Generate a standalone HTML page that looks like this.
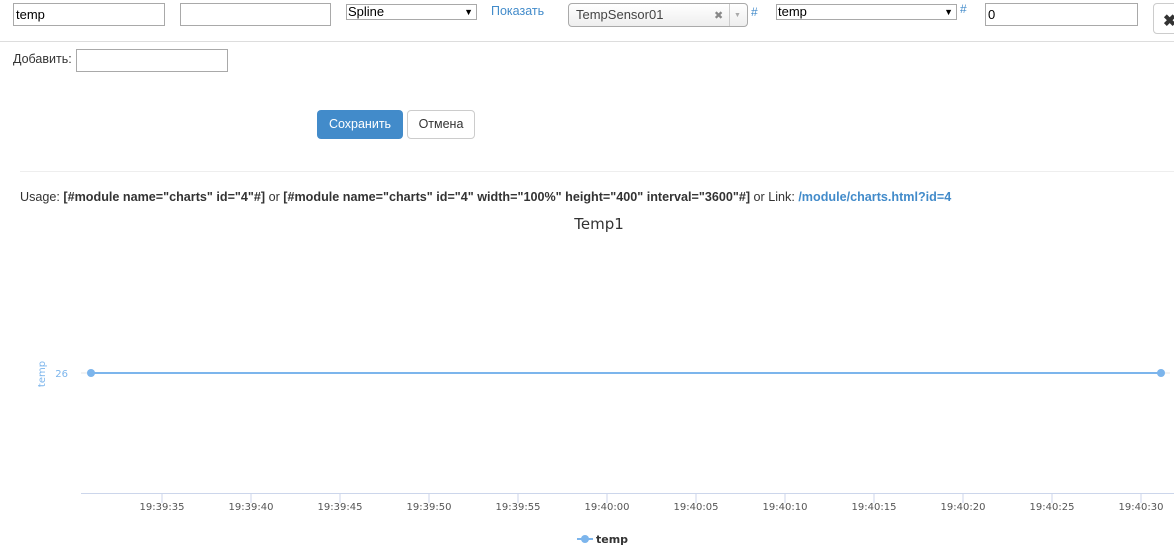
<!DOCTYPE html>
<html><head><meta charset="utf-8"><style>
body{margin:0;width:1174px;height:550px;overflow:hidden;background:#fff;font-family:"Liberation Sans",Arial,sans-serif;font-size:12px;color:#333;position:relative}
.a{position:absolute}
.inp{border:1px solid #a9a9a9;height:23px;box-sizing:border-box;font-size:13px;padding:2px 2px;line-height:17px;color:#000}
.sel{border:1px solid #a9a9a9;height:16px;box-sizing:border-box;font-size:13px;line-height:13px;padding-left:1px;color:#000}
.sel:after{content:"▼";position:absolute;right:3px;top:1px;font-size:9px}
</style></head><body>
<div class="a inp" style="left:13px;top:3px;width:152px">temp</div>
<div class="a inp" style="left:180px;top:3px;width:151px"></div>
<div class="a sel" style="left:346px;top:4px;width:131px">Spline</div>
<div class="a" style="left:491px;top:4px;font-size:12.5px;color:#428bca">Показать</div>
<div class="a" style="left:568px;top:3px;width:180px;height:24px;border:1px solid #aaa;border-radius:4px;box-sizing:border-box;background:linear-gradient(#fff,#eee);font-size:13px;color:#444;padding:4px 7px;line-height:14px">TempSensor01<span class="a" style="left:145px;top:5px;font-size:11px;color:#888">✖</span><span class="a" style="left:160px;top:0;width:1px;height:22px;background:#ccc"></span><span class="a" style="left:165px;top:5px;font-size:7px;color:#aaa">▼</span></div>
<div class="a" style="left:751px;top:5px;color:#428bca;font-size:12px">#</div>
<div class="a sel" style="left:776px;top:4px;width:181px">temp</div>
<div class="a" style="left:960px;top:2px;color:#428bca;font-size:12px">#</div>
<div class="a inp" style="left:985px;top:3px;width:153px">0</div>
<div class="a" style="left:1153px;top:3px;width:40px;height:31px;border:1px solid #ccc;border-radius:4px;box-sizing:border-box;font-size:16px;font-weight:bold;padding:7px 0 0 9px;color:#333">✖</div>
<div class="a" style="left:0;top:41px;width:1174px;height:1px;background:#ddd"></div>
<div class="a" style="left:13px;top:52px;font-size:12.5px">Добавить:</div>
<div class="a inp" style="left:76px;top:49px;width:152px"></div>
<div class="a" style="left:317px;top:110px;width:86px;height:29px;background:#428bca;border-radius:4px;color:#fff;font-size:12.5px;text-align:center;line-height:28px">Сохранить</div>
<div class="a" style="left:407px;top:110px;width:68px;height:29px;border:1px solid #ccc;box-sizing:border-box;border-radius:4px;font-size:12.5px;text-align:center;line-height:27px">Отмена</div>
<div class="a" style="left:20px;top:171px;width:1154px;height:1px;background:#eee"></div>
<div class="a" style="left:20px;top:190px;font-size:12.6px;white-space:nowrap">Usage: <b>[#module name="charts" id="4"#]</b> or <b>[#module name="charts" id="4" width="100%" height="400" interval="3600"#]</b> or Link: <b style="color:#428bca">/module/charts.html?id=4</b></div>
<svg class="a" style="left:0;top:0" width="1174" height="550" font-family="DejaVu Sans,sans-serif">
<text x="599" y="229" text-anchor="middle" font-size="15" fill="#333">Temp1</text>
<text x="45" y="374" font-size="10" fill="#7cb5ec" text-anchor="middle" transform="rotate(-90 45 374)">temp</text>
<text x="68" y="377" font-size="10" fill="#7cb5ec" text-anchor="end">26</text>
<line x1="81" y1="373" x2="1170" y2="373" stroke="#e6e6e6"/>
<line x1="91" y1="373" x2="1161" y2="373" stroke="#7cb5ec" stroke-width="2"/>
<circle cx="91" cy="373" r="4" fill="#7cb5ec"/><circle cx="1161" cy="373" r="4" fill="#7cb5ec"/>
<line x1="81" y1="493.5" x2="1174" y2="493.5" stroke="#ccd6eb"/>
<g stroke="#ccd6eb">
<line x1="162" y1="493" x2="162" y2="503"/><line x1="251" y1="493" x2="251" y2="503"/><line x1="340" y1="493" x2="340" y2="503"/><line x1="429" y1="493" x2="429" y2="503"/><line x1="518" y1="493" x2="518" y2="503"/><line x1="607" y1="493" x2="607" y2="503"/><line x1="696" y1="493" x2="696" y2="503"/><line x1="785" y1="493" x2="785" y2="503"/><line x1="874" y1="493" x2="874" y2="503"/><line x1="963" y1="493" x2="963" y2="503"/><line x1="1052" y1="493" x2="1052" y2="503"/><line x1="1141" y1="493" x2="1141" y2="503"/>
</g>
<g font-size="10" fill="#555" text-anchor="middle">
<text x="162" y="510">19:39:35</text><text x="251" y="510">19:39:40</text><text x="340" y="510">19:39:45</text><text x="429" y="510">19:39:50</text><text x="518" y="510">19:39:55</text><text x="607" y="510">19:40:00</text><text x="696" y="510">19:40:05</text><text x="785" y="510">19:40:10</text><text x="874" y="510">19:40:15</text><text x="963" y="510">19:40:20</text><text x="1052" y="510">19:40:25</text><text x="1141" y="510">19:40:30</text>
</g>
<line x1="577" y1="539" x2="593" y2="539" stroke="#7cb5ec" stroke-width="2"/><circle cx="585" cy="539" r="4" fill="#7cb5ec"/>
<text x="596" y="543" font-size="11" font-weight="bold" fill="#333">temp</text>
</svg>
</body></html>
